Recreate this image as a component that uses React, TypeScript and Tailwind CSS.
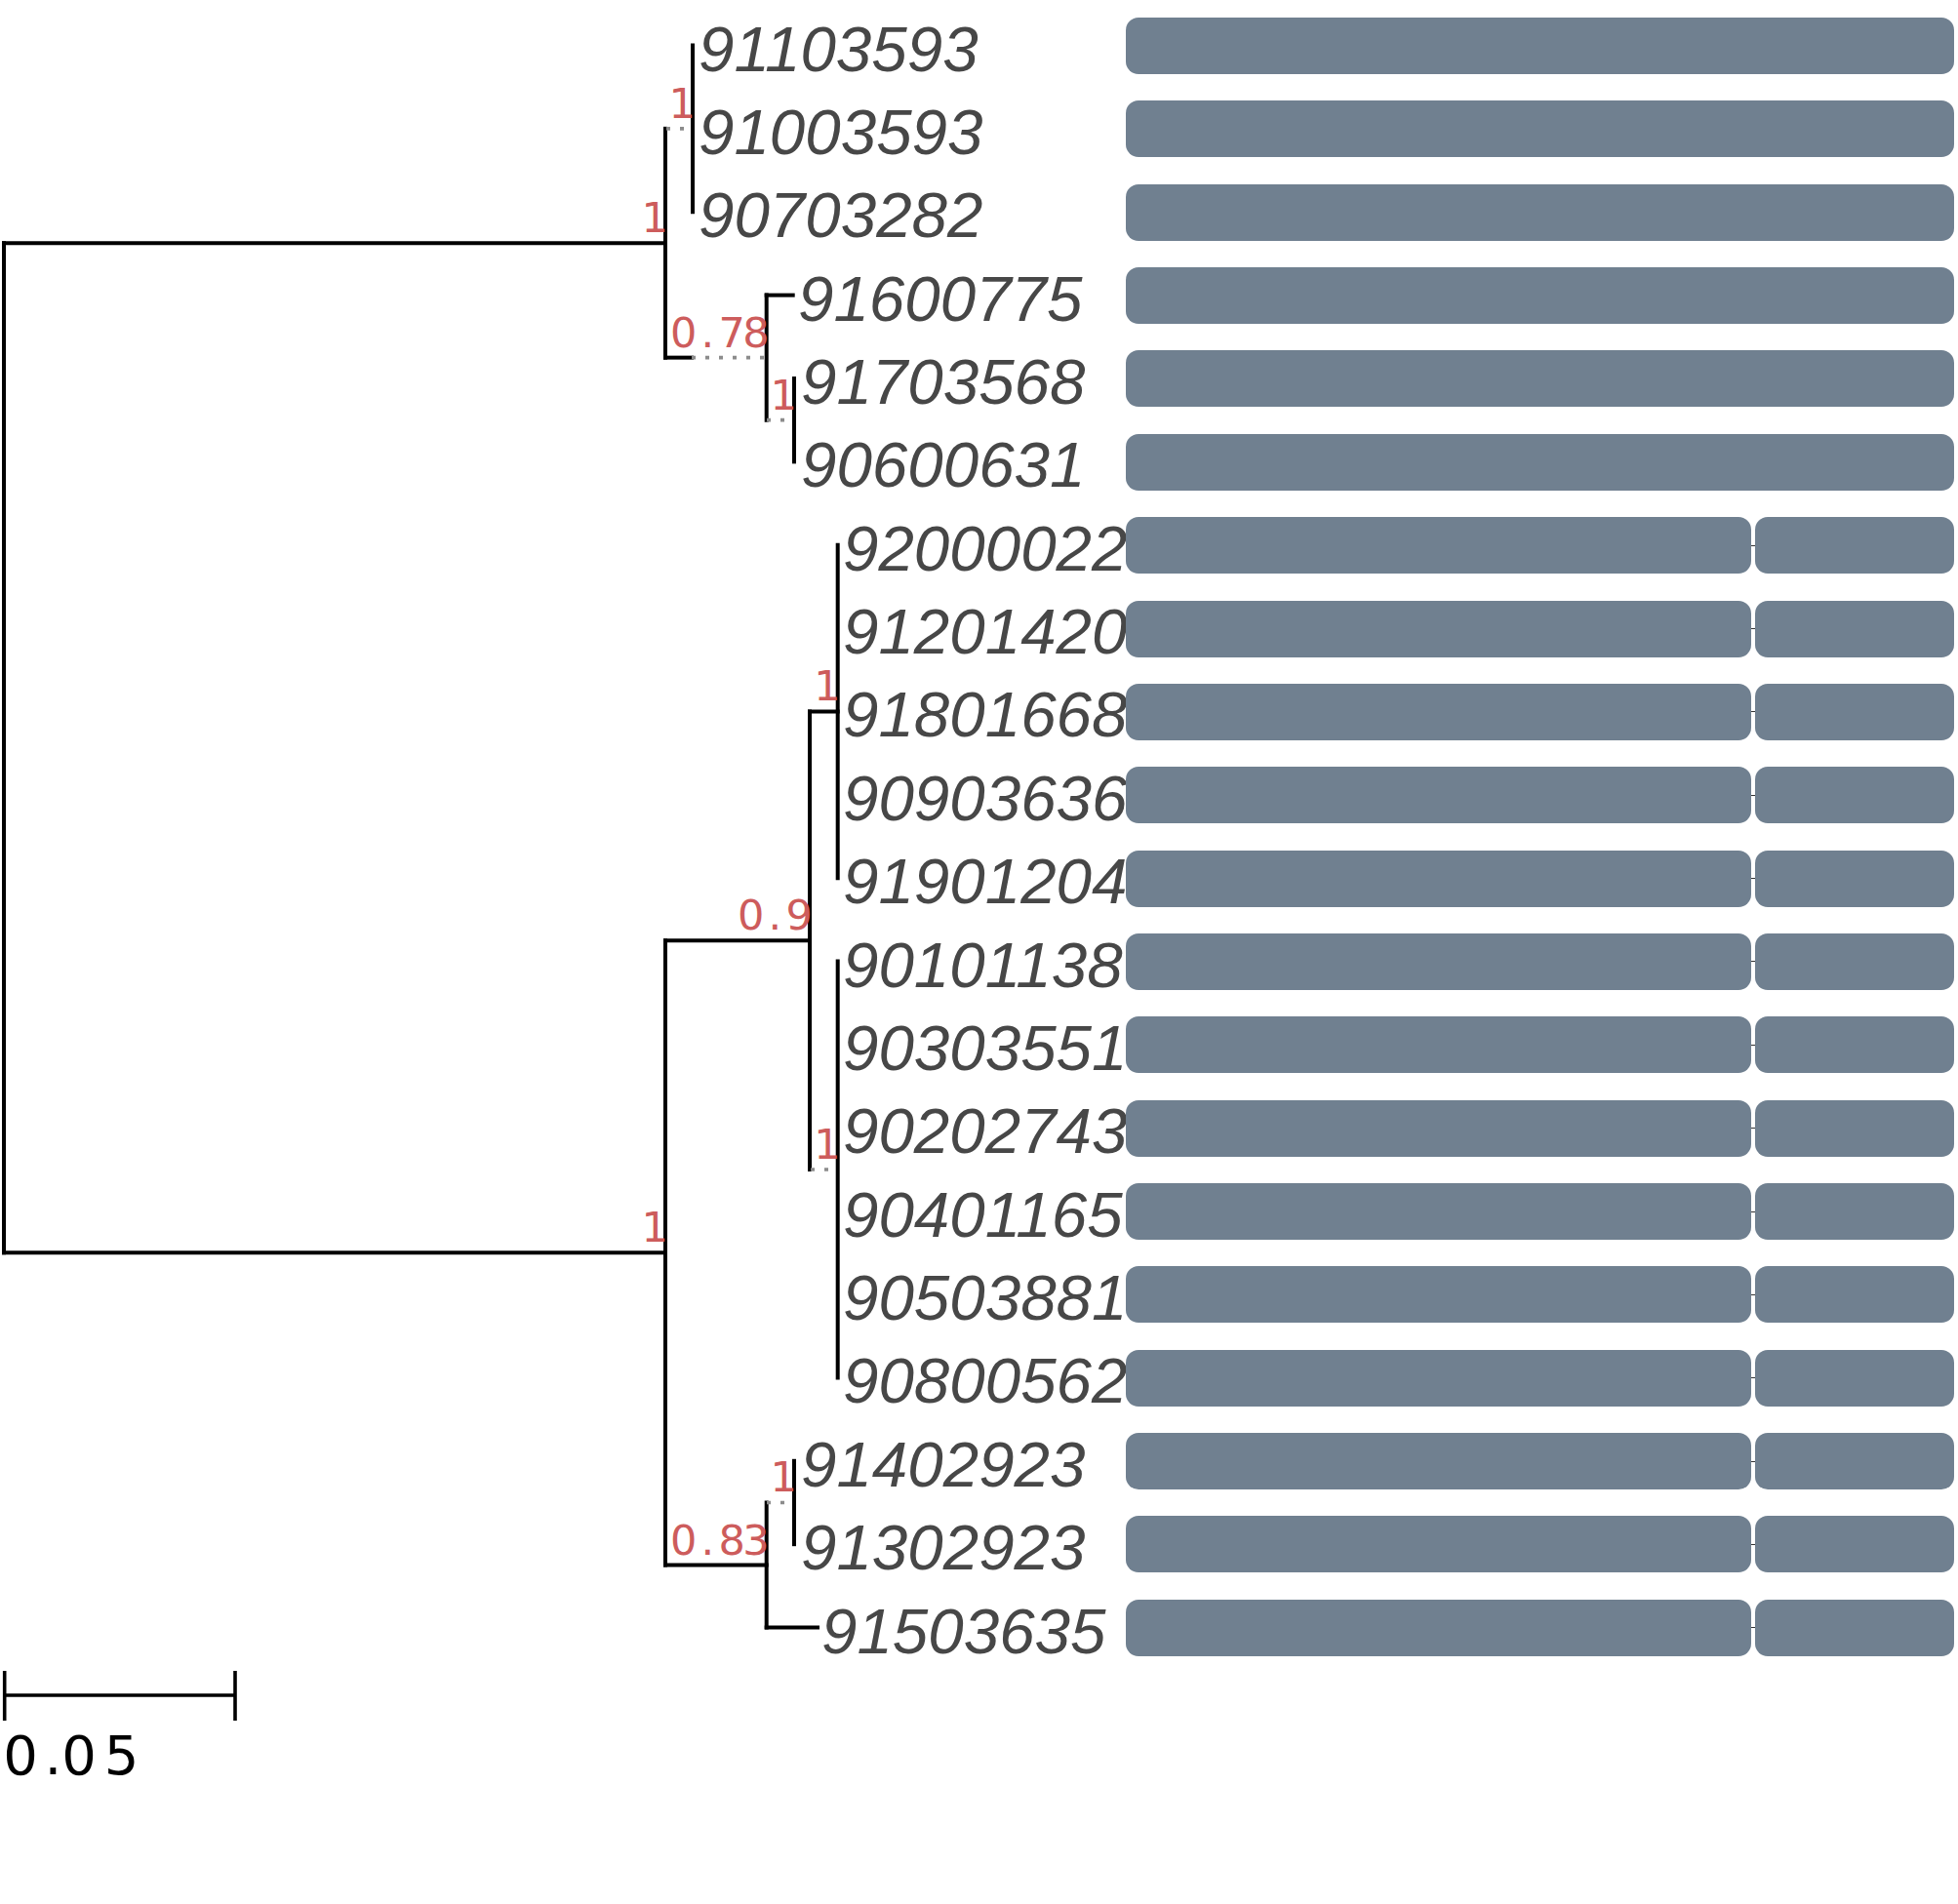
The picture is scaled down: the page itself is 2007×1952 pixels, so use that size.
import React from "react";

const PITCH = 85.37;
const tipY = (i: number) => 46.5 + PITCH * i;

const tips = [
  { name: "91103593", x: 716 },
  { name: "91003593", x: 716 },
  { name: "90703282", x: 716 },
  { name: "91600775", x: 818 },
  { name: "91703568", x: 821 },
  { name: "90600631", x: 821 },
  { name: "92000022", x: 864 },
  { name: "91201420", x: 864 },
  { name: "91801668", x: 864 },
  { name: "90903636", x: 864 },
  { name: "91901204", x: 864 },
  { name: "90101138", x: 864 },
  { name: "90303551", x: 864 },
  { name: "90202743", x: 864 },
  { name: "90401165", x: 864 },
  { name: "90503881", x: 864 },
  { name: "90800562", x: 864 },
  { name: "91402923", x: 821 },
  { name: "91302923", x: 821 },
  { name: "91503635", x: 842 },
];

// node positions (x = where the vertical sits, y = height of its stem)
const yA = tipY(1);
const yBi = (tipY(4) + tipY(5)) / 2;
const yB = (tipY(3) + yBi) / 2;
const yAB = (yA + yB) / 2;
const yC1 = tipY(8);
const yC2 = (tipY(11) + tipY(16)) / 2;
const yC = (yC1 + yC2) / 2;
const yDi = (tipY(17) + tipY(18)) / 2;
const yD = (yDi + tipY(19)) / 2;
const yCD = (yC + yD) / 2;

type Seg = [number, number, number, number];

const solid: Seg[] = [
  // root
  [4, yAB, 4, yCD],
  [4, yAB, 682, yAB],
  [4, yCD, 682, yCD],
  // upper clade
  [682, yA, 682, yB],
  [710, tipY(0), 710, tipY(2)],
  [682, yB, 709, yB],
  [785.7, tipY(3), 785.7, yBi],
  [785.7, tipY(3), 812.7, tipY(3)],
  [814, tipY(4), 814, tipY(5)],
  // lower clade
  [682, yC, 682, yD],
  [682, yC, 830, yC],
  [830, yC1, 830, yC2],
  [830, yC1, 858.7, yC1],
  [858.7, tipY(6), 858.7, tipY(10)],
  [858.7, tipY(11), 858.7, tipY(16)],
  [682, yD, 785.7, yD],
  [785.7, yDi, 785.7, tipY(19)],
  [785.7, tipY(19), 838, tipY(19)],
  [814, tipY(17), 814, tipY(18)],
];

const dotted: Seg[] = [
  [683, yA, 710, yA],
  [709, yB, 785.7, yB],
  [786, yBi, 814, yBi],
  [831, yC2, 858.7, yC2],
  [786, yDi, 814, yDi],
];

const support = [
  { x: 710, y: yA, v: "1" },
  { x: 682, y: yAB, v: "1" },
  { x: 785.7, y: yB, v: "0.78" },
  { x: 814, y: yBi, v: "1" },
  { x: 858.7, y: yC1, v: "1" },
  { x: 830, y: yC, v: "0.9" },
  { x: 858.7, y: yC2, v: "1" },
  { x: 682, y: yCD, v: "1" },
  { x: 814, y: yDi, v: "1" },
  { x: 785.7, y: yD, v: "0.83" },
];

const CELL = 24.75;

// support values are set in fixed-width cells, right-aligned on the node
const Support = ({ x, y, v }: { x: number; y: number; v: string }) => {
  const end = x + 1.5;
  const n = v.length;
  return (
    <text y={y - 11} textAnchor="middle" className="fill-[#cd5c5c] text-[43px] font-['DejaVu_Sans',sans-serif]">
      {v.split("").map((c, k) => (
        <tspan key={k} x={end - CELL * (n - k - 0.5)}>
          {c}
        </tspan>
      ))}
    </text>
  );
};

const Tree = () => (
  <svg width={1154} height={1952} viewBox="0 0 1154 1952" className="shrink-0 block overflow-visible">
    {solid.map(([x1, y1, x2, y2], i) => (
      <line key={"s" + i} x1={x1} y1={y1} x2={x2} y2={y2} stroke="#000" strokeWidth={4} strokeLinecap="square" />
    ))}
    {dotted.map(([x1, y1, x2, y2], i) => (
      <line key={"d" + i} x1={x1} y1={y1} x2={x2} y2={y2} stroke="#8c8c8c" strokeWidth={3.6} strokeDasharray="4 10" />
    ))}
    {support.map((s, i) => (
      <Support key={"n" + i} {...s} />
    ))}
    {tips.map((t, i) => (
      <text
        key={t.name}
        x={t.x}
        y={tipY(i) + 26}
        className="fill-[#474747] text-[65.5px] italic font-['Liberation_Sans',Arial,sans-serif]"
      >
        {t.name}
      </text>
    ))}
    {/* scale bar */}
    <g stroke="#000" strokeWidth={3.6}>
      <line x1={4.7} y1={1738} x2={241} y2={1738} />
      <line x1={4.7} y1={1713} x2={4.7} y2={1764} />
      <line x1={241} y1={1713} x2={241} y2={1764} />
    </g>
    <text y={1819} textAnchor="middle" className="fill-black text-[56px] font-['DejaVu_Sans',sans-serif]">
      <tspan x={21}>0</tspan>
      <tspan x={54.5}>.</tspan>
      <tspan x={81}>0</tspan>
      <tspan x={124.5}>5</tspan>
    </text>
  </svg>
);

const Bar = ({ split }: { split: boolean }) =>
  split ? (
    <div className="flex items-center h-[58px]">
      <div className="w-[641px] h-full rounded-[13px] bg-[#708090]" />
      <div className="w-[4px] h-px bg-[#333]" />
      <div className="w-[204px] h-full rounded-[13px] bg-[#708090]" />
    </div>
  ) : (
    <div className="w-[849px] h-[58px] rounded-[13px] bg-[#708090]" />
  );

export default function App() {
  return (
    <div className="flex w-[2007px] h-[1952px] bg-white overflow-hidden">
      <Tree />
      <div className="flex flex-col pt-[18px] w-[849px] shrink-0">
        {tips.map((t, i) => (
          <div key={t.name} className="h-[85.37px] shrink-0">
            <Bar split={i >= 6} />
          </div>
        ))}
      </div>
    </div>
  );
}
